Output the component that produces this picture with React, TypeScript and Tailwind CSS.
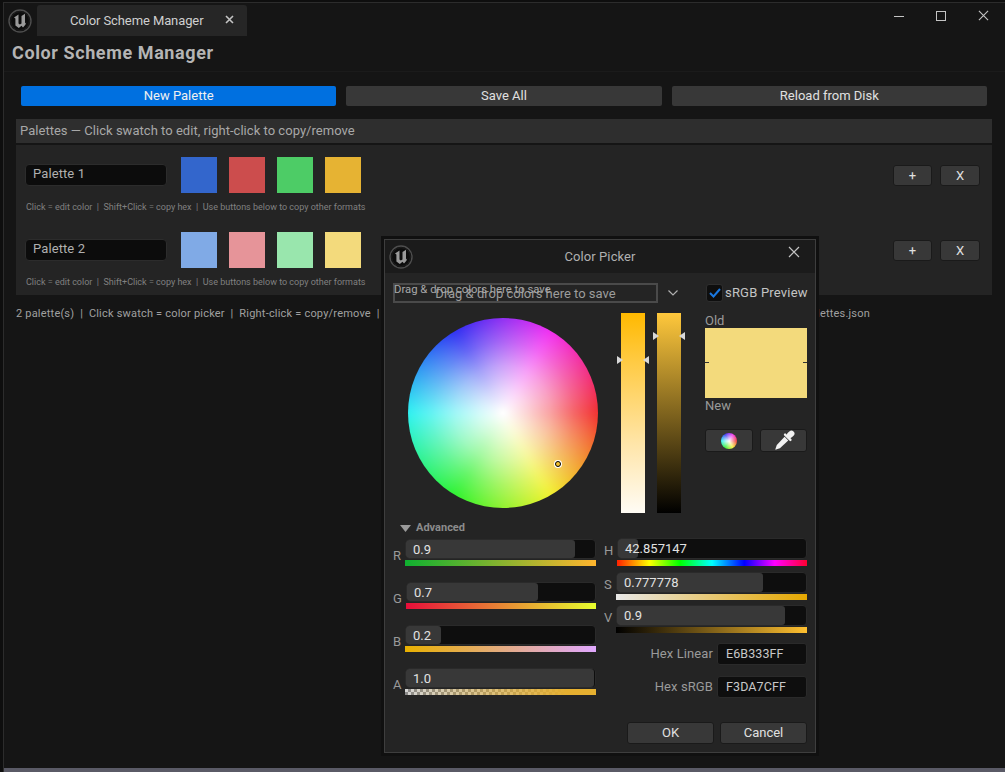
import React from 'react';

const UeLogo: React.FC = () => (
  <svg width="24" height="24" viewBox="0 0 24 24" className="shrink-0">
    <circle cx="12" cy="12" r="11" fill="#0c0c0c" stroke="#4e4e4e" strokeWidth="1.4" />
    <circle cx="12" cy="12" r="9.4" fill="none" stroke="#1e1e1e" strokeWidth="1" />
    <path
      d="M6 8.5 L10.5 5.5 L10.5 14.5 L11.8 15.6 L13.5 14.5 L13.5 7 L17 4.8 L17 14.5 L18.2 13.6 L17.4 15.8 L15 18.6 L13.5 16.8 L10.8 19 L7.4 16.5 L7.4 9.4 Z"
      fill="#9a9a9a"
    />
  </svg>
);

const CloseIcon: React.FC<{ size: number }> = ({ size }) => (
  <svg width={size} height={size} viewBox="0 0 12 12" className="text-[#c4c4c4]">
    <path d="M1 1 L11 11 M11 1 L1 11" stroke="currentColor" strokeWidth="1.2" fill="none" />
  </svg>
);

const DarkButton: React.FC<{ className: string; children: React.ReactNode }> = ({ className, children }) => (
  <button className={`flex items-center justify-center rounded-[3px] bg-[#383838] border border-[#1a1a1a] text-[#e0e0e0] text-[13px] ${className}`}>
    {children}
  </button>
);

const PaletteRow: React.FC<{ name: string; colors: string[] }> = ({ name, colors }) => (
  <div className="h-[75px]">
    <div className="flex items-start">
      <div className="w-[142px] h-[22px] mt-[7px] rounded-[4px] bg-[#0c0c0c] border border-[#2c2c2c] pl-[7px] text-[13px] leading-[17px] text-[#b0b0b0] tracking-[0.1px]">
        {name}
      </div>
      <div className="flex gap-[12px] ml-[14px]">
        {colors.map((c) => (
          <div key={c} className="w-[36px] h-[36px]" style={{ backgroundColor: c }} />
        ))}
      </div>
      <div className="flex gap-[8px] ml-auto mt-[8px]">
        <DarkButton className="w-[39px] h-[21px]">+</DarkButton>
        <DarkButton className="w-[40px] h-[21px]">X</DarkButton>
      </div>
    </div>
    <div className="mt-[8px] ml-px h-[12px] leading-[12px] text-[9px] text-[#808080] whitespace-pre">
      Click = edit color  |  Shift+Click = copy hex  |  Use buttons below to copy other formats
    </div>
  </div>
);

const Marker: React.FC<{ className: string; flip?: boolean }> = ({ className, flip }) => (
  <svg width="6" height="8" viewBox="0 0 6 8" className={`absolute ${className}`}>
    <path d={flip ? 'M6 0 L0 4 L6 8 Z' : 'M0 0 L6 4 L0 8 Z'} fill="#d8d8d8" />
  </svg>
);

const Slider: React.FC<{
  label: string;
  value: string;
  fill: number;
  labelClass: string;
  boxClass: string;
  stripClass: string;
  alpha?: boolean;
}> = ({ label, value, fill, labelClass, boxClass, stripClass, alpha }) => (
  <div className="flex">
    <div className={`text-[13px] text-[#9a9a9a] leading-[14px] ${labelClass}`}>{label}</div>
    <div className="flex-1 flex flex-col">
      <div className={`relative rounded-[4px] bg-[#0e0e0e] border border-[#2a2a2a] ${boxClass}`}>
        <div className="absolute left-0 top-0 bottom-0 rounded-[3px] bg-[#383838]" style={{ width: `${fill * 100}%` }} />
        <div className="relative pl-[7px] text-[13px] leading-[20px] text-[#e2e2e2]">{value}</div>
      </div>
      {alpha ? (
        <div className="mt-px h-[6px] bg-[repeating-conic-gradient(#8c8c8c_0_25%,#d4d4d4_0_50%)] [background-size:6px_6px]">
          <div className={`h-full ${stripClass}`} />
        </div>
      ) : (
        <div className={`mt-px h-[6px] ${stripClass}`} />
      )}
    </div>
  </div>
);

const HexRow: React.FC<{ label: string; value: string }> = ({ label, value }) => (
  <div className="flex items-center justify-end gap-[4px]">
    <div className="text-[13px] text-[#9a9a9a] tracking-[0.1px]">{label}</div>
    <div className="w-[90px] h-[22px] rounded-[3px] bg-[#0e0e0e] border border-[#2a2a2a] pl-[8px] text-[12.5px] leading-[20px] text-[#c8c8c8] tracking-[0.1px]">
      {value}
    </div>
  </div>
);

const ColorPicker: React.FC = () => (
  <div className="absolute left-[384px] top-[239px] w-[432px] h-[514px] bg-[#242424] border border-[#3e3e3e] shadow-[0_0_0_3px_#101010] flex flex-col">
    <div className="relative h-[33px] bg-[#1b1b1b] flex items-center justify-center shrink-0">
      <div className="absolute left-[4px] top-[5px]">
        <UeLogo />
      </div>
      <div className="text-[13px] text-[#b0b0b0] mt-px tracking-[0.1px]">Color Picker</div>
      <div className="absolute left-[403px] top-[6px]">
        <CloseIcon size={12} />
      </div>
    </div>

    <div className="flex-1 px-[8px] pt-[10px]">
      <div className="flex items-center h-[20px]">
        <div className="relative shrink-0 w-[265px] h-[20px] pt-px border-2 border-[#4a4a4a] flex items-center justify-center text-[13px] text-[#9c9c9c] whitespace-nowrap">
          <span className="absolute left-[-1px] top-[-3px] text-[11.3px] text-[#a8a8a8]">Drag &amp; drop colors here to save</span>
          Drag &amp; drop colors here to save
        </div>
        <svg width="10" height="6" viewBox="0 0 10 6" className="ml-[10px] shrink-0">
          <path d="M0.5 0.5 L5 5 L9.5 0.5" stroke="#b0b0b0" strokeWidth="1.2" fill="none" />
        </svg>
        <div className="ml-[28px] shrink-0 w-[17px] h-[18px] rounded-[3px] bg-[#0e0e0e] border border-[#2e2e2e] flex items-center justify-center">
          <svg width="12" height="10" viewBox="0 0 12 10">
            <path d="M1 5 L4.5 8.5 L11 1" stroke="#1a78e0" strokeWidth="2" fill="none" />
          </svg>
        </div>
        <div className="ml-[2px] text-[13px] text-[#c4c4c4] tracking-[0.2px] whitespace-nowrap">sRGB Preview</div>
      </div>

      <div className="flex mt-[10px] h-[200px]">
        <div className="relative w-[190px] h-[190px] ml-[15px] mt-[5px] rounded-full overflow-hidden">
          <div className="absolute inset-[-10px] blur-[4px] bg-[conic-gradient(from_90deg,#f23030,#f2f230,#30f230,#30f2f2,#3030f2,#f230f2,#f23030)]" />
          <div className="absolute inset-0 rounded-full bg-[radial-gradient(closest-side,#ffffff,#ffffffc8_25%,#ffffff8a_50%,#ffffff40_75%,#ffffff00)]" />
          <div className="absolute left-[147px] top-[143px] w-[6px] h-[6px] rounded-full bg-[#f3c030] border border-black shadow-[0_0_0_1px_#ffffff]" />
        </div>

        <div className="relative w-[24px] h-[200px] ml-[23px] bg-[linear-gradient(to_bottom,#ffb900,#ffcb45_25%,#ffe5a8_65%,#fffcf5)]">
          <Marker className="left-[-4px] top-[43px]" />
          <Marker className="left-[22px] top-[43px]" flip />
        </div>
        <div className="relative w-[24px] h-[200px] ml-[12px] bg-[linear-gradient(to_bottom,#ffc83c,#000000)]">
          <Marker className="left-[-4px] top-[19px]" />
          <Marker className="left-[22px] top-[19px]" flip />
        </div>

        <div className="w-[102px] ml-[24px] flex flex-col">
          <div className="h-[15px] text-[13px] leading-[15px] text-[#9a9a9a]">Old</div>
          <div className="relative h-[70px] bg-[#f3da7c]">
            <div className="absolute left-0 top-[34px] w-[4px] h-px bg-[#333333]" />
            <div className="absolute right-0 top-[34px] w-[4px] h-px bg-[#333333]" />
          </div>
          <div className="h-[15px] text-[13px] leading-[15px] text-[#9a9a9a]">New</div>
          <div className="flex justify-between mt-[16px]">
            <DarkButton className="w-[48px] h-[23px]">
              <div className="relative w-[16px] h-[16px] rounded-full bg-[conic-gradient(from_90deg,#f23a3a,#f2f23a,#3af23a,#3af2f2,#3a3af2,#f23af2,#f23a3a)]">
                <div className="absolute inset-0 rounded-full bg-[radial-gradient(closest-side,#ffffff,#ffffff00)]" />
              </div>
            </DarkButton>
            <DarkButton className="w-[47px] h-[23px]">
              <svg width="24" height="24" viewBox="0 0 24 24" className="shrink-0">
                <g transform="rotate(45 12 12)" fill="#f2f2f2">
                  <rect x="9" y="-1.5" width="6" height="8" rx="3" />
                  <rect x="7" y="5.5" width="10" height="2.4" rx="1.2" />
                  <path d="M9.4 8.6 L14.6 8.6 L14.2 20 L12 24.5 L9.8 20 Z" />
                </g>
              </svg>
            </DarkButton>
          </div>
        </div>
      </div>

      <div className="flex items-center h-[14px] mt-[8px] ml-[7px] gap-[5px]">
        <svg width="11" height="7" viewBox="0 0 11 7">
          <path d="M0 0 L11 0 L5.5 7 Z" fill="#9a9a9a" />
        </svg>
        <div className="text-[11px] font-bold text-[#8c8c8c]">Advanced</div>
      </div>

      <div className="flex mt-[4px]">
        <div className="w-[203px] flex flex-col gap-[16px]">
          <Slider label="R" value="0.9" fill={0.895} labelClass="w-[12px] mt-[10px]" boxClass="h-[20px]" stripClass="bg-[linear-gradient(to_right,#0fb030,#ffb52e)]" />
          <Slider label="G" value="0.7" fill={0.695} labelClass="w-[13px] mt-[10px]" boxClass="h-[20px]" stripClass="bg-[linear-gradient(to_right,#e80e3a,#e8ff2e)]" />
          <Slider label="B" value="0.2" fill={0.185} labelClass="w-[12px] mt-[10px]" boxClass="h-[20px]" stripClass="bg-[linear-gradient(to_right,#e8b000,#e0a8ff)]" />
          <Slider label="A" value="1.0" fill={0.995} alpha labelClass="w-[12px] mt-[10px]" boxClass="h-[20px]" stripClass="bg-[linear-gradient(to_right,#e6b03000,#e6b030_85%)]" />
        </div>

        <div className="w-[203px] ml-[8px] flex flex-col mt-[-1px]">
          <Slider label="H" value="42.857147" fill={0.105} labelClass="w-[13px] mt-[6px]" boxClass="h-[21px]" stripClass="bg-[linear-gradient(to_right,#ff2000,#ffff00_17%,#00ff00_33%,#00ffff_50%,#0000ff_67%,#ff00ff_83%,#ff0030)]" />
          <div className="h-[6px]" />
          <Slider label="S" value="0.777778" fill={0.77} labelClass="w-[12px] mt-[6px]" boxClass="h-[21px]" stripClass="bg-[linear-gradient(to_right,#e8e8e8,#e6a800)]" />
          <div className="h-[5px]" />
          <Slider label="V" value="0.9" fill={0.89} labelClass="w-[12px] mt-[6px]" boxClass="h-[21px]" stripClass="bg-[linear-gradient(to_right,#000000,#ffc030)]" />
          <div className="h-[10px]" />
          <HexRow label="Hex Linear" value="E6B333FF" />
          <div className="h-[11px]" />
          <HexRow label="Hex sRGB" value="F3DA7CFF" />
        </div>
      </div>

      <div className="flex justify-end gap-[6px] mt-[24px]">
        <DarkButton className="w-[87px] h-[22px]">OK</DarkButton>
        <DarkButton className="w-[87px] h-[22px]">Cancel</DarkButton>
      </div>
    </div>
  </div>
);

export default function App() {
  return (
    <div className="relative w-[1005px] h-[772px] overflow-hidden bg-[#0e0e0e] pl-[3px] pt-[2px] flex flex-col [font-family:Roboto,sans-serif]">
      <div className="flex-1 flex flex-col bg-[#151515] border-l border-t border-[#2c2c2c]">
        <div className="h-[33px] flex items-end shrink-0">
          <div className="ml-[4px] mb-[3px]">
            <UeLogo />
          </div>
          <div className="relative ml-[5px] w-[210px] h-[31px] rounded-t-[3px] bg-[#262626] flex items-center pl-[33px] text-[13px] text-[#cfcfcf] tracking-[-0.1px]">
            Color Scheme Manager
            <div className="absolute left-[188px] top-[10px]">
              <svg width="9" height="9" viewBox="0 0 9 9">
                <path d="M1 1 L8 8 M8 1 L1 8" stroke="#c4c4c4" strokeWidth="1.6" fill="none" />
              </svg>
            </div>
          </div>
          <div className="ml-auto mr-[16px] mb-[15px] flex items-center gap-[32px]">
            <div className="w-[10px] h-px bg-[#c4c4c4] mt-[2px]" />
            <div className="w-[10px] h-[10px] border border-[#c4c4c4]" />
            <CloseIcon size={11} />
          </div>
        </div>

        <div className="h-[36px] flex items-center pl-[8px] pb-[2px] border-b border-[#1b1b1b] shrink-0">
          <h1 className="text-[18px] font-bold text-[#b4b4b4] tracking-[0.6px]">Color Scheme Manager</h1>
        </div>

        <div className="flex-1 pl-[12px] pr-[13px]">
          <div className="flex gap-[10px] px-[5px] mt-[14px]">
            <button className="flex-1 h-[20px] rounded-[2px] bg-[#0070e0] text-[13px] text-[#f0f0f0]">New Palette</button>
            <button className="flex-1 h-[20px] rounded-[2px] bg-[#383838] text-[13px] text-[#e0e0e0]">Save All</button>
            <button className="flex-1 h-[20px] rounded-[2px] bg-[#383838] text-[13px] text-[#e0e0e0]">Reload from Disk</button>
          </div>

          <div className="mt-[13px] h-[24px] bg-[#2e2e2e] pl-[4px] text-[13px] leading-[24px] text-[#a8a8a8] tracking-[0.03px]">
            Palettes — Click swatch to edit, right-click to copy/remove
          </div>

          <div className="mt-[2px] h-[150px] bg-[#242424] pl-[9px] pr-[12px] pt-[12px]">
            <PaletteRow name="Palette 1" colors={['#3366cc', '#cc4d4d', '#4dcc66', '#e6b333']} />
            <PaletteRow name="Palette 2" colors={['#80aae6', '#e69499', '#99e6ad', '#f3da7c']} />
          </div>

          <div className="mt-[11px] w-[854px] flex justify-between text-[11px] text-[#a0a0a0] whitespace-pre tracking-[0.2px]">
            <span>2 palette(s)  |  Click swatch = color picker  |  Right-click = copy/remove  |</span>
            <span>Saved to palettes.json</span>
          </div>
        </div>

        <div className="h-[4px] bg-[#5a5a66] shrink-0" />
      </div>

      <ColorPicker />
    </div>
  );
}
